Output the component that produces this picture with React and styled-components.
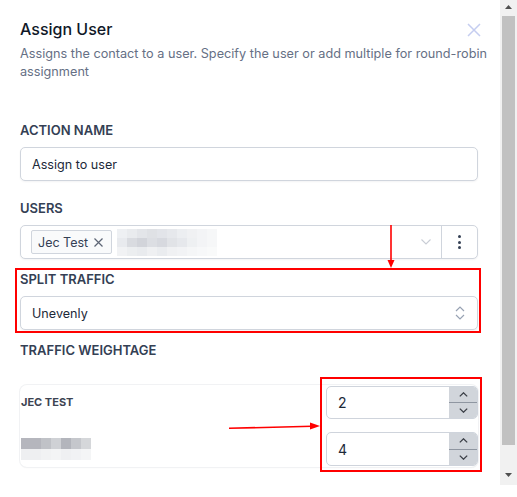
import React from 'react';
import styled, { createGlobalStyle } from 'styled-components';

const Global = createGlobalStyle`
  html, body { margin: 0; padding: 0; background: #fff; }
  body { font-family: Inter, "Noto Sans", sans-serif; }
`;

const Frame = styled.div`
  display: flex;
  align-items: flex-start;
  width: 517px;
  height: 497px;
  background: #fff;
`;

const Panel = styled.div`
  position: relative;
  width: 500px;
  height: 485px;
  box-sizing: border-box;
  padding: 17px 22px 0 20px;
  overflow: hidden;
  display: flex;
  flex-direction: column;
`;

const HeaderRow = styled.div`
  display: flex;
  align-items: center;
  justify-content: space-between;
`;

const Title = styled.h1`
  margin: 0;
  font-size: 16px;
  line-height: 24px;
  font-weight: 500;
  color: #101828;
`;

const CloseIcon = styled.svg`
  width: 14px;
  height: 14px;
  margin-right: -3px;
  margin-top: 2px;
`;

const Description = styled.p`
  margin: 4px -14px 0 0;
  font-size: 12.7px;
  line-height: 18px;
  color: #667085;
`;

const Field = styled.div`
  display: flex;
  flex-direction: column;
  gap: 9px;
  margin-top: ${(p) => p.$mt}px;
`;

const Label = styled.div`
  font-size: 13px;
  line-height: 16px;
  font-weight: 600;
  color: #344054;
  text-transform: uppercase;
`;

const Box = styled.div`
  height: 34px;
  box-sizing: border-box;
  border: 1px solid #d0d5dd;
  border-radius: 5px;
  background: #fff;
  box-shadow: 0 1px 2px rgba(16, 24, 40, 0.05);
  display: flex;
  align-items: center;
  justify-content: ${(p) => (p.$between ? 'space-between' : 'flex-start')};
  padding: ${(p) => p.$pad || '0 12px 0 11px'};
  font-size: 12.6px;
  color: #1d2939;
`;

const Chip = styled.div`
  height: 24px;
  box-sizing: border-box;
  border: 1px solid #d0d5dd;
  border-radius: 2px;
  background: #f9fafb;
  display: flex;
  align-items: center;
  gap: 6px;
  padding: 0 8px 0 6px;
  font-size: 12.5px;
  color: #344054;
`;

const MosaicGrid = styled.div`
  display: grid;
  grid-template-columns: repeat(${(p) => p.$cols}, ${(p) => p.$cw}px);
  grid-auto-rows: ${(p) => p.$rh};
  margin-left: ${(p) => p.$ml || 0}px;
`;

const Cell = styled.span`
  display: block;
`;

const Spacer = styled.div`
  flex: 1;
`;

const Chevron = styled.svg`
  width: 10px;
  height: 6px;
  margin-right: 10px;
`;

const Divider = styled.div`
  width: 1px;
  align-self: stretch;
  background: #d0d5dd;
`;

const KebabZone = styled.div`
  width: 35px;
  display: flex;
  flex-direction: column;
  align-items: center;
  gap: 2.5px;
`;

const Dot = styled.span`
  width: 3px;
  height: 3px;
  border-radius: 50%;
  background: #344054;
`;

const Card = styled.div`
  margin-top: 27px;
  border-radius: 7px;
  box-shadow: 0 0 0 1px #f1f2f4, 0 1px 2px rgba(16, 24, 40, 0.04);
  padding: 1px 0 1px 1px;
  display: flex;
  flex-direction: column;
  gap: 13px;
`;

const WeightRow = styled.div`
  display: flex;
  align-items: center;
  justify-content: space-between;
`;

const RowLabel = styled.div`
  font-size: 11px;
  font-weight: 700;
  color: #3d4452;
  margin-top: -2px;
`;

const NumBox = styled.div`
  width: 152px;
  height: ${(p) => p.$h}px;
  box-sizing: border-box;
  border: 1px solid #cfd4dc;
  border-radius: 5px;
  display: flex;
  overflow: hidden;
  background: #fff;
`;

const NumValue = styled.div`
  flex: 1;
  display: flex;
  align-items: center;
  padding-left: 11px;
  font-size: 14px;
  color: #1d2939;
`;

const Spinner = styled.div`
  width: 28px;
  display: flex;
  flex-direction: column;
  background: #d1d5db;
`;

const SpinBtn = styled.div`
  flex: 1;
  display: flex;
  align-items: center;
  justify-content: center;
  & + & {
    border-top: 1px solid #8f96a1;
  }
`;

const Highlight = styled.div`
  position: absolute;
  left: ${(p) => p.$x}px;
  top: ${(p) => p.$y}px;
  width: ${(p) => p.$w}px;
  height: ${(p) => p.$h}px;
  box-sizing: border-box;
  border: 2px solid #ff0000;
  pointer-events: none;
`;

const ArrowSvg = styled.svg`
  position: absolute;
  left: ${(p) => p.$x}px;
  top: ${(p) => p.$y}px;
  overflow: visible;
  pointer-events: none;
`;

const Scrollbar = styled.div`
  width: 17px;
  height: 485px;
  background: #f1f1f1;
  display: flex;
  flex-direction: column;
  align-items: center;
`;

const ScrollButton = styled.div`
  height: 16px;
  width: 17px;
  display: flex;
  justify-content: center;
  align-items: flex-start;
  box-sizing: border-box;
  padding-top: ${(p) => p.$pt}px;
`;

const Thumb = styled.div`
  width: 13px;
  height: 429px;
  background: #c1c1c1;
`;

const usersMosaic = [
  ['#eef0f3', '#e9ebee', '#e3e5e9', '#dfe1e5', '#e2e4e9', '#e6e8ec', '#eceef1', '#f0f1f3', '#f3f4f6', '#f6f7f8'],
  ['#e8eaee', '#d9dbe0', '#d2d4da', '#dcdee3', '#d7d9df', '#e1e3e7', '#e6e8ec', '#eef0f2', '#f3f4f6', '#f6f7f8'],
  ['#f1f2f4', '#eceef0', '#e9ebee', '#eff0f2', '#eaecef', '#f0f1f3', '#f2f3f5', '#f5f6f7', '#f7f8f9', '#f9fafa'],
];

const nameMosaic = [
  ['#b5b6bd', '#b5b6bd', '#c0c2c7', '#cfd1d5', '#b3b5bc', '#c5c7cc', '#d5d7da'],
  ['#eeeff1', '#eeeff1', '#f1f2f3', '#f3f4f5', '#eff0f2', '#f1f2f4', '#f4f5f6'],
];

function Mosaic({ data, cw, rh, ml }) {
  return (
    <MosaicGrid $cols={data[0].length} $cw={cw} $rh={rh} $ml={ml}>
      {data.flatMap((row, r) =>
        row.map((c, i) => <Cell key={`${r}-${i}`} style={{ background: c }} />)
      )}
    </MosaicGrid>
  );
}

function SpinChevron({ up }) {
  return (
    <svg width="9" height="5" viewBox="0 0 9 5">
      <path
        d={up ? 'M0.8 4.4 L4.5 0.8 L8.2 4.4' : 'M0.8 0.6 L4.5 4.2 L8.2 0.6'}
        fill="none"
        stroke="#3b3f47"
        strokeWidth="1.3"
      />
    </svg>
  );
}

function NumberInput({ value, h }) {
  return (
    <NumBox $h={h}>
      <NumValue>{value}</NumValue>
      <Spinner>
        <SpinBtn>
          <SpinChevron up />
        </SpinBtn>
        <SpinBtn>
          <SpinChevron />
        </SpinBtn>
      </Spinner>
    </NumBox>
  );
}

export default function App() {
  return (
    <>
      <Global />
      <Frame>
        <Panel>
          <HeaderRow>
            <Title>Assign User</Title>
            <CloseIcon viewBox="0 0 14 14">
              <path d="M1 1 L13 13 M13 1 L1 13" stroke="#c5cdf0" strokeWidth="1.5" fill="none" />
            </CloseIcon>
          </HeaderRow>
          <Description>
            Assigns the contact to a user. Specify the user or add multiple for round-robin assignment
          </Description>

          <Field $mt={41}>
            <Label>Action Name</Label>
            <Box>Assign to user</Box>
          </Field>

          <Field $mt={19}>
            <Label>Users</Label>
            <Box $pad="0 0 0 10px">
              <Chip>
                Jec Test
                <svg width="9" height="9" viewBox="0 0 9 9">
                  <path d="M0.5 0.5 L8.5 8.5 M8.5 0.5 L0.5 8.5" stroke="#5d6574" strokeWidth="1.2" fill="none" />
                </svg>
              </Chip>
              <Mosaic data={usersMosaic} cw={10} rh="9px" ml={5} />
              <Spacer />
              <Chevron viewBox="0 0 10 6">
                <path d="M0.5 0.5 L5 5 L9.5 0.5" stroke="#c9cdd5" strokeWidth="1.1" fill="none" />
              </Chevron>
              <Divider />
              <KebabZone>
                <Dot />
                <Dot />
                <Dot />
              </KebabZone>
            </Box>
          </Field>

          <Field $mt={12}>
            <Label>Split Traffic</Label>
            <Box $between>
              Unevenly
              <svg width="10" height="14" viewBox="0 0 10 14">
                <path d="M1 5 L5 1 L9 5 M1 9 L5 13 L9 9" stroke="#98a2b3" strokeWidth="1.2" fill="none" />
              </svg>
            </Box>
          </Field>

          <Field $mt={12}>
            <Label>Traffic Weightage</Label>
          </Field>

          <Card>
            <WeightRow>
              <RowLabel>JEC TEST</RowLabel>
              <NumberInput value="2" h={33} />
            </WeightRow>
            <WeightRow>
              <Mosaic data={nameMosaic} cw={10} rh="11px" />
              <NumberInput value="4" h={34} />
            </WeightRow>
          </Card>

          <Highlight $x={15} $y={268} $w={466} $h={65} />
          <Highlight $x={320} $y={377} $w={162} $h={95} />

          <ArrowSvg $x={386} $y={224} width="10" height="46">
            <line x1="5" y1="1" x2="5" y2="38" stroke="#ff0000" strokeWidth="1.6" />
            <polygon points="1.5,36 8.5,36 5,44" fill="#ff0000" />
          </ArrowSvg>
          <ArrowSvg $x={228} $y={420} width="94" height="12">
            <line x1="1" y1="8.3" x2="84" y2="6.3" stroke="#ff0000" strokeWidth="1.6" />
            <polygon points="82,2.5 92,6 82,9.5" fill="#ff0000" />
          </ArrowSvg>
        </Panel>
        <Scrollbar>
          <ScrollButton $pt={5}>
            <svg width="7" height="4" viewBox="0 0 7 4">
              <polygon points="3.5,0 7,4 0,4" fill="#505050" />
            </svg>
          </ScrollButton>
          <Thumb />
          <Spacer />
          <ScrollButton $pt={4}>
            <svg width="7" height="4" viewBox="0 0 7 4">
              <polygon points="0,0 7,0 3.5,4" fill="#505050" />
            </svg>
          </ScrollButton>
        </Scrollbar>
      </Frame>
    </>
  );
}
